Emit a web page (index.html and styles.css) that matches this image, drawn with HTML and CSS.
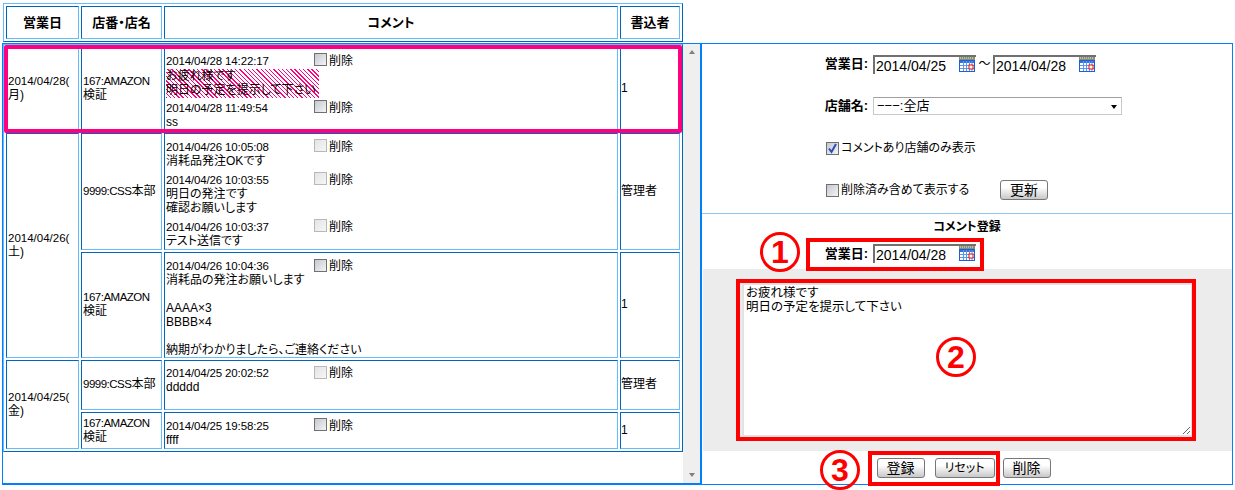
FILE: index.html
```html
<!DOCTYPE html>
<html lang="ja">
<head>
  <meta charset="UTF-8">
  <title>コメント登録</title>
  <link rel="stylesheet" href="styles.css">
</head>
<body>
  <svg class="defs" width="0" height="0">
    <symbol id="cal" viewBox="0 0 16 15">
      <rect x="0" y="0" width="16" height="3" fill="#8a8f7a"/>
      <path d="M1 1h14" stroke="#e4e8d8" stroke-width="1" stroke-dasharray="1 1"/>
      <rect x=".5" y="3.5" width="15" height="11" fill="#fff" stroke="#1f5fd0"/>
      <rect x="1" y="4" width="14" height="2" fill="#2f74e0"/>
      <path d="M4.5 4v10M7.5 4v10M10.5 4v10M13 4v10M1 8.5h14M1 11.5h14" stroke="#5f96ec" stroke-width="1"/>
      <rect x="10" y="8" width="4" height="4" fill="#fff" stroke="#e01010"/>
    </symbol>
  </svg>

  <!-- header row -->
  <table class="list list-head">
    <colgroup><col class="c1"><col class="c2"><col class="c3"><col class="c4"></colgroup>
    <tr>
      <th>営業日</th>
      <th>店番・店名</th>
      <th>コメント</th>
      <th>書込者</th>
    </tr>
  </table>

  <div class="main">
    <div class="left">
      <div class="scroll-area">
        <table class="list">
          <colgroup><col class="c1"><col class="c2"><col class="c3"><col class="c4"></colgroup>
          <tr class="r1">
            <td><span class="num">2014/04/28(</span><br>月)</td>
            <td><span class="code">167:AMAZON</span><br>検証</td>
            <td class="comment">
              <div class="entry">
                <div class="entry-head"><span class="time">2014/04/28 14:22:17</span><span class="cb"></span>削除</div>
                <div class="hatch">お疲れ様です<br>明日の予定を提示して下さい</div>
              </div>
              <div class="entry">
                <div class="entry-head"><span class="time">2014/04/28 11:49:54</span><span class="cb"></span>削除</div>
                ss
              </div>
            </td>
            <td class="writer">1</td>
          </tr>
          <tr class="r2">
            <td rowspan="2"><span class="num">2014/04/26(</span><br>土)</td>
            <td><span class="code">9999:CSS</span>本部</td>
            <td class="comment">
              <div class="entry">
                <div class="entry-head"><span class="time">2014/04/26 10:05:08</span><span class="cb off"></span>削除</div>
                消耗品発注OKです
              </div>
              <div class="entry">
                <div class="entry-head"><span class="time">2014/04/26 10:03:55</span><span class="cb off"></span>削除</div>
                明日の発注です<br>確認お願いします
              </div>
              <div class="entry">
                <div class="entry-head"><span class="time">2014/04/26 10:03:37</span><span class="cb off"></span>削除</div>
                テスト送信です
              </div>
            </td>
            <td class="writer">管理者</td>
          </tr>
          <tr class="r3">
            <td><span class="code">167:AMAZON</span><br>検証</td>
            <td class="comment">
              <div class="entry">
                <div class="entry-head"><span class="time">2014/04/26 10:04:36</span><span class="cb"></span>削除</div>
                消耗品の発注お願いします<br><br>AAAA×3<br>BBBB×4<br><br>納期がわかりましたら、ご連絡ください
              </div>
            </td>
            <td class="writer">1</td>
          </tr>
          <tr class="r4">
            <td rowspan="2"><span class="num">2014/04/25(</span><br>金)</td>
            <td><span class="code">9999:CSS</span>本部</td>
            <td class="comment">
              <div class="entry">
                <div class="entry-head"><span class="time">2014/04/25 20:02:52</span><span class="cb off"></span>削除</div>
                ddddd<br><br>
              </div>
            </td>
            <td class="writer">管理者</td>
          </tr>
          <tr class="r5">
            <td><span class="code">167:AMAZON</span><br>検証</td>
            <td class="comment">
              <div class="entry">
                <div class="entry-head"><span class="time">2014/04/25 19:58:25</span><span class="cb"></span>削除</div>
                ffff
              </div>
            </td>
            <td class="writer">1</td>
          </tr>
        </table>
        <div class="pink-box"></div>
      </div>
      <div class="scrollbar">
        <span class="arrow-up"></span>
        <span class="arrow-down"></span>
      </div>
    </div>

    <div class="right">
      <!-- search form -->
      <div class="search">
        <div class="form-row">
          <label class="form-label">営業日:</label>
          <span class="date-field"><input class="date-input" type="text" value="2014/04/25"><svg class="cal-icon"><use href="#cal"/></svg></span>
          <span class="tilde">～</span>
          <span class="date-field"><input class="date-input" type="text" value="2014/04/28"><svg class="cal-icon"><use href="#cal"/></svg></span>
        </div>
        <div class="form-row">
          <label class="form-label">店舗名:</label>
          <span class="select-wrap">
            <select class="shop-select"><option>−−−:全店</option></select>
          </span>
        </div>
        <div class="form-row check-row">
          <span class="cb checked"><svg viewBox="0 0 13 13" width="13" height="13"><path d="M3 6.5l2.5 3.5L10 2" fill="none" stroke="#2a4fb8" stroke-width="2"/></svg></span>コメントあり店舗のみ表示
        </div>
        <div class="form-row check-row">
          <span class="cb"></span><span class="check-text">削除済み含めて表示する</span>
          <button class="btn btn-update" type="button">更新</button>
        </div>
      </div>

      <!-- comment registration -->
      <div class="register">
        <div class="register-title">コメント登録</div>
        <div class="form-row">
          <label class="form-label">営業日:</label>
          <span class="date-field"><input class="date-input" type="text" value="2014/04/28"><svg class="cal-icon"><use href="#cal"/></svg></span>
        </div>
        <div class="text-band">
          <textarea class="comment-text">お疲れ様です
明日の予定を提示して下さい</textarea>
        </div>
        <div class="btn-row">
          <button class="btn btn-save" type="button">登録</button>
          <button class="btn btn-reset" type="button">リセット</button>
          <button class="btn btn-del" type="button">削除</button>
        </div>
      </div>

      <!-- red annotations -->
      <div class="mark mark1"></div>
      <div class="mark mark2"></div>
      <div class="mark mark3"></div>
      <span class="circled circled1">1</span>
      <span class="circled circled2">2</span>
      <span class="circled circled3">3</span>
    </div>
  </div>
</body>
</html>
```

FILE: styles.css
```css
/* Colors */
:root {
  --blue: #0080ff;
  --cell-dark: #0066bb;
  --cell-light: #66bbff;
  --pink: #ff0080;
  --red: #ff0000;
}

html, body {
  height: 490px;
  overflow: hidden;
}

body {
  margin: 0;
  padding: 3px 0 0 0;
  box-sizing: border-box;
  background: #fff;
  color: #000;
  font-family: "Liberation Sans", "Noto Sans CJK JP", sans-serif;
  font-size: 12px;
  line-height: 14px;
  font-feature-settings: "palt";
}

.defs {
  position: absolute;
}

/* Tables */
.list {
  width: 680px;
  table-layout: fixed;
  border-collapse: separate;
  border-spacing: 2px;
  border: 1px solid;
  border-color: var(--cell-light) var(--cell-dark) var(--cell-dark) var(--cell-light);
}

.list-head {
  margin-left: 3px;
}

.c1 { width: 73px; }
.c2 { width: 81px; }
.c3 { width: 454px; }
.c4 { width: 60px; }

.list th,
.list td {
  box-sizing: border-box;
  border: 1px solid;
  border-color: var(--cell-dark) var(--cell-light) var(--cell-light) var(--cell-dark);
}

.list th {
  height: 33px;
  padding: 0;
  font-size: 13px;
  font-weight: 700;
}

.list td {
  padding: 0 1px 2px 1px;
  vertical-align: middle;
  white-space: nowrap;
}

.list .writer {
  padding-left: 0;
}

.list .comment {
  padding: 4px 1px 0 1px;
}

.list .r3 .comment {
  padding-top: 6px;
}

.r1 td { height: 84px; }
.r2 td { height: 117px; }
.r3 td { height: 105px; }
.r4 td { height: 50px; }
.r5 td { height: 37px; }

.num {
  font-size: 11.5px;
}

.code {
  font-size: 11.5px;
  letter-spacing: -0.5px;
}

.entry + .entry {
  margin-top: 5px;
}

.entry-head {
  display: flex;
  align-items: center;
}

.time {
  width: 148px;
  font-size: 11.5px;
  letter-spacing: -0.15px;
}

.hatch {
  width: 153px;
  margin: 1px 0 -2px;
  padding-bottom: 1px;
  background: repeating-linear-gradient(45deg, var(--pink) 0, var(--pink) 1px, #fff 1px, #fff 3px);
}

.pink-box {
  position: absolute;
  left: 1px;
  top: 1px;
  width: 678px;
  height: 88px;
  box-sizing: border-box;
  border: 4px solid var(--pink);
  border-radius: 2px;
}

/* Checkbox */
.cb {
  display: inline-block;
  flex: none;
  box-sizing: border-box;
  width: 13px;
  height: 13px;
  margin: -2px 2px 0 0;
  border: 1px solid #707070;
  background: linear-gradient(135deg, #c4c8cf, #f4f4f6);
}

.cb.off {
  border-color: #b8b8b8;
  background: linear-gradient(135deg, #e4e4e4, #f6f6f6);
}

.cb.checked svg {
  display: block;
  margin: -1px;
}

/* Layout */
.main {
  display: flex;
  height: 442px;
  margin-top: 1px;
}

.left {
  display: flex;
  margin-left: 2px;
  border-left: 1px solid var(--blue);
  border-top: 1px solid var(--blue);
  border-bottom: 2px solid var(--blue);
}

.scroll-area {
  position: relative;
  width: 680px;
}

.scrollbar {
  display: flex;
  flex-direction: column;
  justify-content: space-between;
  align-items: center;
  width: 17px;
  padding: 6px 0;
  box-sizing: border-box;
  background: #efefef;
}

.arrow-up,
.arrow-down {
  width: 0;
  height: 0;
  border-left: 3.5px solid transparent;
  border-right: 3.5px solid transparent;
}

.arrow-up { border-bottom: 4px solid #808080; }
.arrow-down { border-top: 4px solid #808080; }

.right {
  position: relative;
  width: 530px;
  border: 1px solid var(--blue);
  border-left-width: 2px;
}

/* Search form */
.search {
  display: flex;
  flex-direction: column;
  gap: 22px;
  height: 170px;
  box-sizing: border-box;
  padding-top: 10px;
  border-bottom: 1px solid #8cc6f5;
}

.form-row {
  display: flex;
  align-items: center;
  height: 20px;
}

.form-label {
  width: 166px;
  margin-right: 5px;
  text-align: right;
  font-size: 13px;
  font-weight: 700;
}

.date-field {
  position: relative;
  display: block;
  width: 103px;
  height: 19px;
}

.date-input {
  width: 100%;
  height: 100%;
  box-sizing: border-box;
  padding: 1px 0 0 1px;
  border: 0;
  border-top: 2px solid #707070;
  border-left: 2px solid #707070;
  outline: none;
  font-family: inherit;
  font-size: 14px;
}

.cal-icon {
  position: absolute;
  right: 1px;
  top: 2px;
  width: 16px;
  height: 15px;
}

.tilde {
  width: 17px;
  text-align: center;
}

.select-wrap {
  position: relative;
  display: block;
}

.select-wrap::after {
  content: "";
  position: absolute;
  right: 5px;
  top: 8px;
  border-left: 3.5px solid transparent;
  border-right: 3.5px solid transparent;
  border-top: 4px solid #000;
}

.shop-select {
  display: block;
  width: 249px;
  height: 18px;
  padding: 0 0 0 3px;
  border: 1px solid #c8c8c8;
  border-top-color: #a0a0a0;
  border-radius: 0;
  background: #fff;
  appearance: none;
  font-family: inherit;
  font-size: 13px;
  line-height: 16px;
}

.check-row {
  padding-left: 124px;
}

.check-row .cb {
  margin-top: 0;
}

.check-text {
  width: 159px;
}

.btn {
  box-sizing: border-box;
  height: 20px;
  padding: 0;
  border: 1px solid #777;
  border-radius: 3px;
  background: linear-gradient(#fff 35%, #c8c8c8);
  color: #000;
  font-family: inherit;
  font-size: 14px;
  line-height: 16px;
  font-feature-settings: "palt";
}

.btn-update { width: 48px; }
.btn-save { width: 48px; }
.btn-reset { width: 60px; margin-left: 10px; font-size: 12px; }
.btn-del { width: 48px; margin-left: 8px; }

/* Comment registration */
.register {
  display: flex;
  flex-direction: column;
}

.register-title {
  box-sizing: border-box;
  height: 24px;
  padding-top: 6px;
  text-align: center;
  font-weight: 700;
}

.register .form-row {
  height: 21px;
  margin-top: 5px;
}

.text-band {
  height: 182px;
  margin-top: 5px;
  margin-left: 1px;
  padding-top: 14px;
  box-sizing: border-box;
  background: #ececec;
}

.comment-text {
  display: block;
  width: 451px;
  height: 154px;
  box-sizing: border-box;
  margin: 0 auto;
  padding: 1px 2px;
  border: 2px solid #dfe3e8;
  outline: none;
  background: #fff;
  font-family: inherit;
  font-size: 12.5px;
  line-height: 14px;
  font-feature-settings: "palt";
}

.btn-row {
  display: flex;
  justify-content: center;
  align-items: center;
  height: 33px;
  padding: 0 7px 0 0;
  box-sizing: border-box;
}

/* Red annotations */
.mark {
  position: absolute;
  box-sizing: border-box;
  border: 4px solid var(--red);
}

.mark1 { left: 104px; top: 194px; width: 178px; height: 33px; }
.mark2 { left: 34px; top: 235px; width: 460px; height: 162px; }
.mark3 { left: 166px; top: 407px; width: 132px; height: 35px; }

.circled {
  position: absolute;
  display: flex;
  align-items: center;
  justify-content: center;
  box-sizing: border-box;
  width: 40px;
  height: 40px;
  border: 3px solid var(--red);
  border-radius: 50%;
  color: var(--red);
  font-size: 32px;
  font-weight: 700;
  line-height: 34px;
}

.circled1 { left: 58px; top: 188px; }
.circled2 { left: 234px; top: 293px; }
.circled3 { left: 118px; top: 406px; }
```
